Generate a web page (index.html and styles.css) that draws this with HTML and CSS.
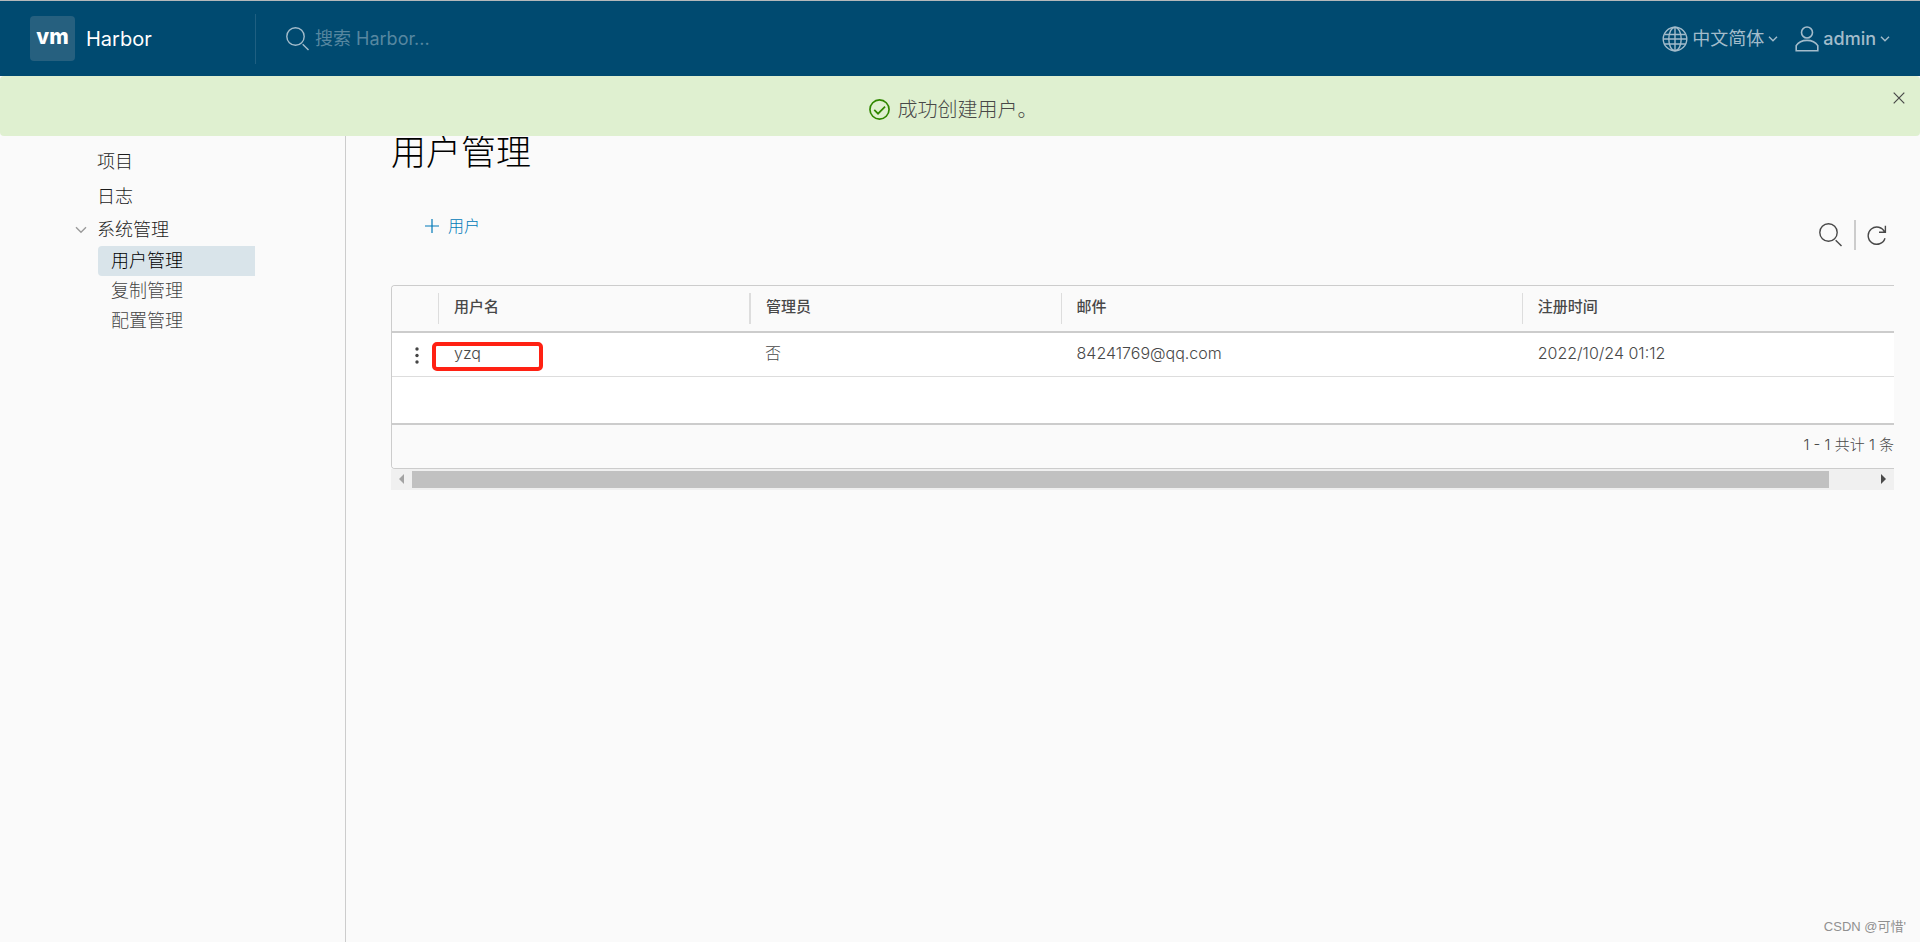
FILE: index.html
```html
<!DOCTYPE html>
<html lang="zh-CN">
<head>
<meta charset="utf-8">
<title>Harbor</title>
<link rel="stylesheet" href="styles.css">
</head>
<body>
<div class="app">
  <header class="header">
    <a class="brand" href="#">
      <span class="brand-logo">vm</span>
      <span class="brand-name">Harbor</span>
    </a>
    <label class="search">
      <svg class="icon-search" viewBox="0 0 24 24" aria-hidden="true"><circle cx="9.5" cy="9.5" r="8.7"/><path d="M16.7 17.2 22.5 23"/></svg>
      <input class="search-input" type="text" placeholder="搜索 Harbor..." aria-label="搜索 Harbor">
    </label>
    <nav class="header-actions">
      <button class="header-button" type="button">
        <svg class="icon-globe" viewBox="0 0 26 26" aria-hidden="true"><circle cx="13" cy="13" r="11.8"/><ellipse cx="13" cy="13" rx="6.2" ry="11.8"/><path d="M13 1.2v23.6M2.6 8.5h20.8M1.2 13h23.6M2.6 18h20.8"/></svg>
        <span>中文简体</span>
        <svg class="icon-caret" viewBox="0 0 10 6" aria-hidden="true"><path d="M1 .8 5 4.8 9 .8"/></svg>
      </button>
      <button class="header-button" type="button">
        <svg class="icon-user" viewBox="0 0 24 26" aria-hidden="true"><circle cx="12" cy="6.5" r="5.5"/><path d="M1.2 24.8v-5.2c2.2-3.4 6.2-5.2 10.8-5.2s8.6 1.8 10.8 5.2v5.2z"/></svg>
        <span class="user-name">admin</span>
        <svg class="icon-caret" viewBox="0 0 10 6" aria-hidden="true"><path d="M1 .8 5 4.8 9 .8"/></svg>
      </button>
    </nav>
  </header>

  <div class="body">
    <div class="alert" role="alert">
      <svg class="icon-success" viewBox="0 0 20 20" aria-hidden="true"><circle cx="10" cy="10" r="9.1"/><path d="M5 10.4 8.6 14 15.3 7.2"/></svg>
      <span>成功创建用户。</span>
      <button class="alert-close" type="button" aria-label="关闭">
        <svg viewBox="0 0 12 12" aria-hidden="true"><path d="M.7.7l10.6 10.6M11.3.7.7 11.3"/></svg>
      </button>
    </div>

    <nav class="sidebar">
      <a class="nav-item" href="#">项目</a>
      <a class="nav-item" href="#">日志</a>
      <button class="nav-item nav-group" type="button">
        <svg class="icon-expand" viewBox="0 0 12 8" aria-hidden="true"><path d="M1 1.2 6 6.2 11 1.2"/></svg>系统管理
      </button>
      <div class="nav-children">
        <a class="nav-child active" href="#">用户管理</a>
        <a class="nav-child" href="#">复制管理</a>
        <a class="nav-child" href="#">配置管理</a>
      </div>
    </nav>

    <main class="content">
      <h1 class="title">用户管理</h1>
      <div class="toolbar">
        <button class="add-button" type="button">
          <svg class="icon-plus" viewBox="0 0 14 14" aria-hidden="true"><path d="M7 0v14M0 7h14"/></svg>
          <span>用户</span>
        </button>
        <div class="tools">
          <button class="tool" type="button" aria-label="搜索">
            <svg class="icon-search" viewBox="0 0 24 24" aria-hidden="true"><circle cx="9.5" cy="9.5" r="8.7"/><path d="M16.7 17.2 22.5 23"/></svg>
          </button>
          <span class="tool-divider"></span>
          <button class="tool" type="button" aria-label="刷新">
            <svg class="icon-refresh" viewBox="0 0 20 20" aria-hidden="true"><path d="M17.7 7.3A8.6 8.6 0 1 0 18 13.2M18.4.8v6.5h-6.4"/></svg>
          </button>
        </div>
      </div>

      <section class="datagrid">
        <table class="grid">
          <colgroup><col class="col-menu"><col class="col-name"><col class="col-admin"><col class="col-mail"><col class="col-time"></colgroup>
          <thead>
            <tr>
              <td></td>
              <th scope="col"><span class="head">用户名</span></th>
              <th scope="col"><span class="head head-wide">管理员</span></th>
              <th scope="col"><span class="head">邮件</span></th>
              <th scope="col"><span class="head">注册时间</span></th>
            </tr>
          </thead>
          <tbody>
            <tr>
              <td class="menu-cell">
                <button class="row-menu" type="button" aria-label="操作">
                  <svg viewBox="0 0 4 17" aria-hidden="true"><circle cx="2" cy="2" r="1.7"/><circle cx="2" cy="8.5" r="1.7"/><circle cx="2" cy="15" r="1.7"/></svg>
                </button>
              </td>
              <td class="name-cell">yzq<span class="highlight"></span></td>
              <td>否</td>
              <td>84241769@qq.com</td>
              <td>2022/10/24 01:12</td>
            </tr>
          </tbody>
        </table>
        <div class="grid-space"></div>
        <footer class="grid-footer">1 - 1 共计 1 条</footer>
      </section>
      <div class="scrollbar" aria-hidden="true">
        <svg class="scroll-arrow" viewBox="0 0 5 10"><path class="arrow-off" d="M5 0v10L0 5z"/></svg>
        <div class="scroll-track"><div class="scroll-thumb"></div></div>
        <svg class="scroll-arrow" viewBox="0 0 5 10"><path class="arrow-on" d="M0 0v10l5-5z"/></svg>
      </div>
    </main>
    <div class="watermark">CSDN @可惜'</div>
  </div>
</div>
</body>
</html>
```
FILE: styles.css
```css
* { box-sizing: border-box; }
body {
  margin: 0;
  background: #fafafa;
  color: #484848;
  font: 300 16px/24px Inter, "Noto Sans CJK SC", sans-serif;
}
button {
  margin: 0;
  padding: 0;
  border: 0;
  background: none;
  color: inherit;
  font: inherit;
  cursor: pointer;
}
a { color: inherit; text-decoration: none; }
svg { display: block; flex: none; fill: none; stroke: currentColor; stroke-width: 1.4; }

.app { display: flex; flex-direction: column; min-height: 100vh; }

/* Header */
.header {
  display: flex;
  align-items: center;
  height: 76px;
  padding: 0 30px;
  border-top: 1px solid #b4b8ba;
  background: #004a70;
  color: #a3bccb;
}
.brand {
  display: flex;
  align-items: center;
  gap: 11px;
  width: 226px;
  height: 50px;
  border-right: 1px solid #1f5f81;
}
.brand-logo {
  width: 45px;
  height: 45px;
  border-radius: 4px;
  background: #26607f;
  color: #fff;
  font-size: 21px;
  font-weight: 800;
  line-height: 42px;
  text-align: center;
}
.brand-name { color: #fff; font-size: 20px; font-weight: 400; }
.search { display: flex; flex: 1; align-items: center; gap: 5px; padding-left: 30px; }
.icon-search { width: 24px; height: 24px; }
.search-input {
  flex: 1;
  min-width: 0;
  padding: 0;
  border: 0;
  outline: 0;
  background: none;
  color: #fff;
  font: 400 18px/24px Inter, "Noto Sans CJK SC", sans-serif;
}
.search-input::placeholder { color: #5787a0; opacity: 1; }
.header-actions { display: flex; gap: 17px; }
.header-button { display: flex; align-items: center; gap: 4px; font-size: 18px; font-weight: 400; }
.icon-globe { width: 26px; height: 26px; }
.icon-user { width: 24px; height: 26px; stroke-width: 1.6; }
.icon-caret { width: 10px; height: 6px; }
.user-name { font-weight: 500; }

/* Body */
.body { position: relative; display: flex; flex: 1; }
.alert {
  position: absolute;
  top: 0;
  left: 0;
  right: 0;
  display: flex;
  align-items: center;
  justify-content: center;
  gap: 8px;
  height: 60px;
  padding: 7px 14px 0 0;
  border-radius: 4px;
  background: #dff0d0;
  font-size: 20px;
}
.icon-success { width: 21px; height: 21px; color: #318700; stroke-width: 1.6; }
.alert-close { position: absolute; top: 16px; right: 15px; }
.alert-close svg { width: 12px; height: 12px; stroke-width: 1.2; }

.sidebar {
  display: flex;
  flex-direction: column;
  width: 346px;
  padding: 68px 90px 0 75px;
  border-right: 1px solid #ccc;
  color: #1c1c1c;
  font-size: 18px;
}
.nav-item { padding-left: 22px; line-height: 35px; }
.nav-group { display: flex; align-items: center; gap: 10px; padding-left: 0; line-height: 32px; }
.icon-expand { width: 12px; height: 8px; color: #9a9a9a; }
.nav-children { display: flex; flex-direction: column; padding-left: 23px; }
.nav-child { padding-left: 13px; color: #454545; line-height: 30px; }
.nav-child.active { border-radius: 4px 0 0 4px; background: #d9e4ea; color: #000; }

.content { flex: 1; min-width: 0; padding: 52px 26px 0 45px; }
.title { margin: 0; color: #000; font-size: 35px; font-weight: 300; line-height: 48px; }
.toolbar {
  display: flex;
  justify-content: space-between;
  padding: 36px 7px 35px 34px;
}
.add-button { display: flex; align-items: center; gap: 9px; height: 28px; color: #0079b8; font-size: 16px; }
.icon-plus { width: 14px; height: 14px; stroke-width: 1.2; }
.tools { display: flex; align-items: center; gap: 11px; padding-top: 8px; }
.tool-divider { width: 2px; height: 30px; background: #ccc; }
.icon-refresh { width: 20px; height: 20px; }

/* Data grid */
.datagrid {
  overflow: hidden;
  border: 1px solid #ccc;
  border-right: 0;
  border-radius: 4px 0 0 4px;
  background: #fff;
}
.grid { width: 100%; border-collapse: collapse; table-layout: fixed; }
.col-menu { width: 46px; }
.col-name { width: 20.7%; }
.col-admin { width: 20.75%; }
.col-mail { width: 30.7%; }
.grid thead { background: #fafafa; }
.grid thead tr { height: 46px; border-bottom: 2px solid #ccc; }
.grid th { padding: 0; font-size: 15px; font-weight: 500; text-align: left; }
.head { display: block; padding: 0 15px 4px; border-left: 1px solid #ddd; line-height: 27px; }
.head-wide { border-left-width: 2px; }
.grid tbody tr { height: 44px; border-bottom: 1px solid #ddd; }
.grid tbody td { padding: 0 16px 2px; }
.grid tbody .menu-cell { padding: 2px 0 0 23px; }
.row-menu { display: block; }
.row-menu svg { width: 4px; height: 17px; fill: #454545; stroke: none; }
.name-cell { position: relative; }
.highlight {
  position: absolute;
  top: 9px;
  left: -6px;
  width: 111px;
  height: 29px;
  border: 4px solid #ff2113;
  border-radius: 5px;
}
.grid-space { height: 46px; }
.grid-footer {
  height: 45px;
  border-top: 2px solid #ccc;
  background: #fafafa;
  font-size: 15px;
  line-height: 40px;
  text-align: right;
}
.scrollbar {
  display: flex;
  align-items: center;
  justify-content: space-between;
  gap: 8px;
  height: 21px;
  padding: 0 8px;
  background: #f0f0f0;
}
.scroll-arrow { width: 5px; height: 10px; stroke: none; }
.arrow-off { fill: #a3a3a3; }
.arrow-on { fill: #4a4a4a; }
.scroll-track { flex: 1; }
.scroll-thumb { width: 97%; height: 17px; background: #c1c1c1; }

.watermark { position: absolute; right: 14px; bottom: 5px; color: #909090; font: 400 13px/20px "Liberation Sans", "Noto Sans CJK SC", sans-serif; }
```
